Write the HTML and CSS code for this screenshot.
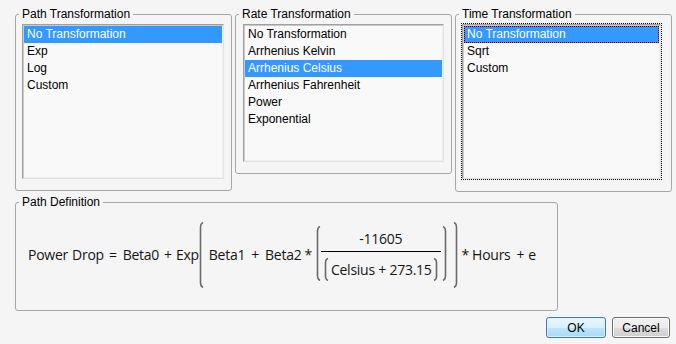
FILE: index.html
```html
<!DOCTYPE html>
<html>
<head>
	<title>Degradation Path Definition</title>
	<link rel="stylesheet" href="styles.css">
</head>
<body>
	<div class="top-row">
		<fieldset class="group path">
			<legend>Path Transformation</legend>
			<div class="list tall">
				<div class="item selected">No Transformation</div>
				<div class="item">Exp</div>
				<div class="item">Log</div>
				<div class="item">Custom</div>
			</div>
		</fieldset>
		<fieldset class="group rate">
			<legend>Rate Transformation</legend>
			<div class="list short">
				<div class="item">No Transformation</div>
				<div class="item">Arrhenius Kelvin</div>
				<div class="item selected">Arrhenius Celsius</div>
				<div class="item">Arrhenius Fahrenheit</div>
				<div class="item">Power</div>
				<div class="item">Exponential</div>
			</div>
		</fieldset>
		<fieldset class="group time">
			<legend>Time Transformation</legend>
			<div class="list tall focused">
				<div class="item selected">No Transformation</div>
				<div class="item">Sqrt</div>
				<div class="item">Custom</div>
			</div>
		</fieldset>
	</div>

	<fieldset class="group definition">
		<legend>Path Definition</legend>
		<div class="formula">
			<span>Power</span>
			<span class="g4">Drop</span>
			<span>=</span>
			<span class="g6">Beta0</span>
			<span>+</span>
			<span class="g4">Exp</span>
			<span class="paren-group big g0">
				<svg class="paren" width="5" height="66" viewBox="0 0 5 66"><path d="M4 0.5 Q1.5 1.5 1.5 5 V61 Q1.5 64.5 4 65.5"/></svg>
				<span class="paren-body">
					<span>Beta1</span>
					<span class="g6">+</span>
					<span class="g6">Beta2</span>
					<span class="g3">*</span>
					<span class="paren-group mid g4">
						<svg class="paren" width="5" height="55" viewBox="0 0 5 55"><path d="M4 0.5 Q1.5 1.5 1.5 5 V50 Q1.5 53.5 4 54.5"/></svg>
						<span class="frac">
							<span class="num">-11605</span>
							<span class="bar"></span>
							<span class="den">
								<svg class="paren" width="5" height="23" viewBox="0 0 5 23"><path d="M4 0.5 Q1.5 1.5 1.5 4 V19 Q1.5 21.5 4 22.5"/></svg>
								<span class="den-text">Celsius + 273.15</span>
								<svg class="paren" width="5" height="23" viewBox="0 0 5 23"><path d="M1 0.5 Q3.5 1.5 3.5 4 V19 Q3.5 21.5 1 22.5"/></svg>
							</span>
						</span>
						<svg class="paren" width="5" height="55" viewBox="0 0 5 55"><path d="M1 0.5 Q3.5 1.5 3.5 5 V50 Q3.5 53.5 1 54.5"/></svg>
					</span>
				</span>
				<svg class="paren" width="5" height="66" viewBox="0 0 5 66"><path d="M1 0.5 Q3.5 1.5 3.5 5 V61 Q3.5 64.5 1 65.5"/></svg>
			</span>
			<span class="g4">*</span>
			<span class="g3">Hours</span>
			<span class="g6">+</span>
			<span class="g4">e</span>
		</div>
	</fieldset>

	<div class="buttons">
		<button class="btn default">OK</button>
		<button class="btn">Cancel</button>
	</div>
</body>
</html>
```

FILE: styles.css
```css
* {
	box-sizing: border-box;
}

body {
	margin: 0;
	padding: 0 0 0 15px;
	background-color: #f5f5f5;
	font-family: "Liberation Sans", Arial, sans-serif;
	font-size: 12px;
	color: #000;
}

.top-row {
	display: flex;
	align-items: flex-start;
	gap: 3px;
	padding-top: 7px;
}

.group {
	margin: 0;
	width: 217px;
	border: 1px solid #a6a6a6;
	border-radius: 3px;
	padding: 3px 7px 11px 6px;
	min-inline-size: 0;
}

.group legend {
	margin-left: -3px;
	padding: 0 3px;
	line-height: 14px;
	font-size: 12px;
}

.rate .list {
	margin-left: 1px;
}

.time {
	padding: 3px 10px 12px 6px;
}

.list {
	background-color: #f9f9f9;
	border: 1px solid;
	border-color: #a0a0a0 #e3e3e3 #e3e3e3 #a0a0a0;
	box-shadow: inset 1px 1px 0 #c9c9c9, inset -1px -1px 0 #efefef;
	padding: 1px;
}

.path .list {
	width: 202px;
}

.rate .list {
	width: 201px;
}

.time .list {
	width: 199px;
}

.tall {
	height: 155px;
}

.short {
	height: 138px;
}

.focused {
	outline: 1px dotted #000;
}

.item {
	height: 17px;
	line-height: 17px;
	padding-left: 3px;
	white-space: nowrap;
}

.item.selected {
	background-color: #3399ff;
	color: #fff;
}

.focused .item.selected {
	outline: 1px dotted #000;
	outline-offset: -1px;
}

.definition {
	width: 543px;
	margin-top: 3px;
	padding: 0 0 10px 12px;
}

.definition legend {
	margin-left: -9px;
}

.formula {
	height: 91px;
	display: flex;
	align-items: center;
	font-family: "Open Sans", "Noto Sans", sans-serif;
	font-size: 14px;
	letter-spacing: -0.25px;
	line-height: 16px;
	color: #151515;
	white-space: nowrap;
}

.formula span,
.formula svg {
	flex: none;
}

.formula > * + *,
.paren-body > * + * {
	margin-left: 5px;
}

.formula .g0 { margin-left: 0; }
.formula .g1 { margin-left: 1px; }
.formula .g2 { margin-left: 2px; }
.formula .g3 { margin-left: 3px; }
.formula .g4 { margin-left: 4px; }
.formula .g6 { margin-left: 6px; }

.paren-group {
	display: flex;
	align-items: center;
}

.paren-body {
	display: flex;
	align-items: center;
	padding: 0 6px 0 5px;
}

.paren-body > .mid {
	margin-bottom: 2px;
}

.paren {
	display: block;
}

.paren path {
	fill: none;
	stroke: #6a6a6a;
	stroke-width: 1.6;
}

.frac {
	display: flex;
	flex-direction: column;
	align-items: center;
	padding-top: 5px;
	margin-right: 1px;
}

.num {
	padding-bottom: 4px;
}

.bar {
	align-self: stretch;
	height: 1px;
	background-color: #000;
}

.den {
	display: flex;
	align-items: center;
	margin: 6px 3px 0 3px;
}

.den-text {
	padding: 0 1px 0 2px;
}

.buttons {
	display: flex;
	justify-content: flex-end;
	gap: 6px;
	margin-top: 6px;
	padding-right: 6px;
}

.btn {
	height: 21px;
	width: 58px;
	font-family: "Liberation Sans", Arial, sans-serif;
	font-size: 12px;
	color: #000;
	border: 1px solid #707070;
	border-radius: 3px;
	background: linear-gradient(#f2f2f2 0%, #ebebeb 50%, #dddddd 51%, #cfcfcf 100%);
	box-shadow: inset 0 0 0 1px #fbfbfb;
	padding: 0;
}

.btn.default {
	width: 60px;
	border-color: #3c7fb1;
	background: linear-gradient(#eaf6fd 0%, #d9f0fc 50%, #bee6fd 51%, #a7d9f5 100%);
	box-shadow: inset 0 0 0 1px #dcecfc;
}
```
